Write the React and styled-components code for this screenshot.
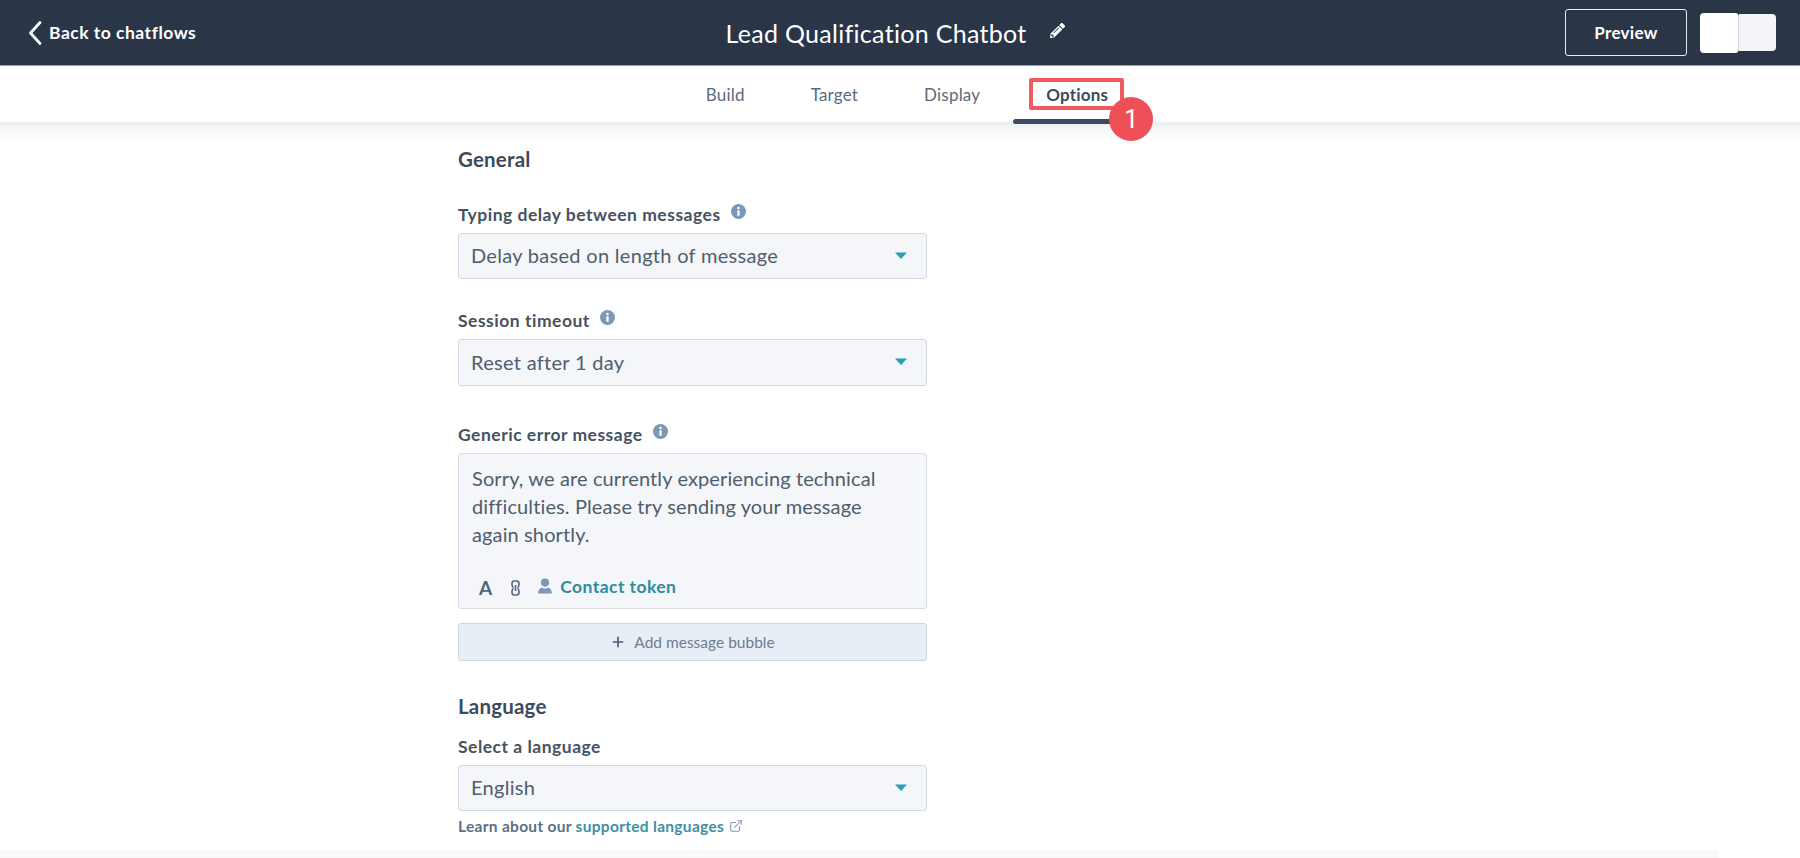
import React from "react";
import styled, { createGlobalStyle } from "styled-components";
import { Plus, ExternalLink } from "lucide-react";
import { FaPencilAlt } from "react-icons/fa";

const GlobalStyle = createGlobalStyle`
  html, body {
    margin: 0;
    padding: 0;
    background: #fff;
    font-family: "Lato", "Open Sans", sans-serif;
    color: #33475b;
  }
`;

const InfoIcon = () => (
  <InfoSvg viewBox="0 0 14 14">
    <circle cx="7" cy="7" r="7" fill="#7c98b6" />
    <circle cx="7" cy="3.8" r="1.2" fill="#fff" />
    <rect x="5.9" y="5.8" width="2.2" height="5.2" rx="0.5" fill="#fff" />
  </InfoSvg>
);

const Caret = () => (
  <CaretSvg viewBox="0 0 12 7">
    <path d="M0 0.5h12L6 7z" fill="#2a9fb3" />
  </CaretSvg>
);

const Select = ({ value, height }) => (
  <SelectBox $height={height}>
    <span>{value}</span>
    <Caret />
  </SelectBox>
);

export default function App() {
  return (
    <>
      <GlobalStyle />
      <Page>
        <Header>
          <BackLink>
            <svg width="14" height="26" viewBox="0 0 14 26" fill="none" stroke="#fff" strokeWidth="2.8" strokeLinecap="round" strokeLinejoin="round">
              <path d="M12 2.500L2.500 13l9.500 10.500" />
            </svg>
            <span>Back to chatflows</span>
          </BackLink>
          <TitleGroup>
            <Title>Lead Qualification Chatbot</Title>
            <PencilWrap>
              <FaPencilAlt size={15} color="#fff" />
            </PencilWrap>
          </TitleGroup>
          <Actions>
            <PreviewBtn>Preview</PreviewBtn>
            <Toggle>
              <ToggleKnob />
              <ToggleRest />
            </Toggle>
          </Actions>
        </Header>

        <TabBar>
          <Tab>Build</Tab>
          <Tab>Target</Tab>
          <Tab>Display</Tab>
          <Tab $active>
            Options
            <Highlight />
            <Badge>1</Badge>
          </Tab>
        </TabBar>

        <Main>
          <Column>
            <SectionTitle>General</SectionTitle>

            <Label $top={31}>
              Typing delay between messages <InfoIcon />
            </Label>
            <Select value="Delay based on length of message" height={46} />

            <Label $top={29}>
              Session timeout <InfoIcon />
            </Label>
            <Select value="Reset after 1 day" height={47} />

            <Label $top={36}>
              Generic error message <InfoIcon />
            </Label>
            <MessageBox>
              <MessageText>
                Sorry, we are currently experiencing technical difficulties.
                Please try sending your message again shortly.
              </MessageText>
              <MessageTools>
                <ToolLetter>A</ToolLetter>
                <svg width="9" height="16" viewBox="0 0 9 16" fill="none" stroke="#51667c" strokeWidth="1.6">
                  <path d="M2.500 7.500C1.500 7 1 6 1 4.500V3.500C1 2 2 1 3.500 1h2C7 1 8 2 8 3.500v1C8 6 7.500 7 6.500 7.500" />
                  <path d="M2.500 8.500C1.500 9 1 10 1 11.500v1C1 14 2 15 3.500 15h2C7 15 8 14 8 12.500v-1C8 10 7.500 9 6.500 8.500" />
                  <path d="M4.500 5v6" />
                </svg>
                <PersonSvg viewBox="0 0 12 14">
                  <circle cx="6" cy="4" r="3.6" fill="#7c98b6" />
                  <path d="M0 13.500c0-3.500 2-5 3.500-5 1 .8 4 .8 5 0 1.500 0 3.500 1.500 3.500 5z" fill="#7c98b6" />
                </PersonSvg>
                <TokenLink>Contact token</TokenLink>
              </MessageTools>
            </MessageBox>

            <AddButton>
              <Plus size={16} strokeWidth={2.4} color="#425b76" />
              Add message bubble
            </AddButton>

            <SectionTitle $top={33}>Language</SectionTitle>

            <Label $top={16}>Select a language</Label>
            <Select value="English" height={46} />

            <HelpText>
              Learn about our <HelpLink>supported languages</HelpLink>
              <ExternalLink size={14} strokeWidth={1.8} color="#7c98b6" />
            </HelpText>
          </Column>
        </Main>
        <BottomStrip />
      </Page>
    </>
  );
}

const Page = styled.div`
  width: 1800px;
  height: 858px;
  overflow: hidden;
  display: flex;
  flex-direction: column;
`;

const Header = styled.header`
  height: 66px;
  flex: none;
  box-sizing: border-box;
  background: #2a3547;
  border-bottom: 1px solid #97a3ad;
  display: grid;
  grid-template-columns: 1fr auto 1fr;
  align-items: center;
  padding: 0 24px 0 28px;
`;

const BackLink = styled.div`
  display: flex;
  align-items: center;
  gap: 7px;
  color: #fff;
  font-size: 17.5px;
  font-weight: 700;
  letter-spacing: 0.5px;
`;

const TitleGroup = styled.div`
  display: flex;
  align-items: center;
  gap: 23px;
  padding-right: 14px;
  padding-top: 1px;
`;

const Title = styled.div`
  color: #fff;
  font-size: 25px;
  font-weight: 400;
  letter-spacing: 0.3px;
`;

const PencilWrap = styled.span`
  display: flex;
  margin-top: -5px;
`;

const Actions = styled.div`
  display: flex;
  justify-content: flex-end;
  align-items: center;
  gap: 13px;
`;

const PreviewBtn = styled.button`
  width: 122px;
  height: 47px;
  box-sizing: border-box;
  background: transparent;
  border: 1px solid #e6ebf0;
  border-radius: 3px;
  color: #fff;
  font-family: inherit;
  font-size: 17px;
  font-weight: 700;
  letter-spacing: 0.3px;
`;

const Toggle = styled.div`
  display: flex;
  align-items: center;
`;

const ToggleKnob = styled.div`
  width: 39px;
  height: 40px;
  background: #fff;
  border-radius: 4px;
  border-right: 1px solid #cfd6de;
  box-sizing: border-box;
`;

const ToggleRest = styled.div`
  width: 37px;
  height: 37px;
  background: #f3f5f8;
  border-radius: 0 4px 4px 0;
`;

const TabBar = styled.nav`
  height: 56px;
  flex: none;
  background: #fff;
  display: flex;
  justify-content: center;
  padding-left: 14px;
  box-sizing: border-box;
  position: relative;
  z-index: 1;
`;

const Tab = styled.div`
  position: relative;
  display: flex;
  align-items: center;
  padding: 0 33px 0;
  height: 100%;
  box-sizing: border-box;
  font-size: 17px;
  font-weight: ${(p) => (p.$active ? 700 : 400)};
  letter-spacing: 0.2px;
  color: ${(p) => (p.$active ? "#3b4a60" : "#5a6b7d")};

  ${(p) =>
    p.$active &&
    `
    &::after {
      content: "";
      position: absolute;
      left: 0;
      right: 0;
      bottom: -2px;
      height: 5px;
      border-radius: 3px;
      background: #3b4a60;
    }
  `}
`;

const Highlight = styled.span`
  position: absolute;
  left: 16px;
  top: 12px;
  width: 95px;
  height: 32px;
  box-sizing: border-box;
  border: 4px solid #ef5a5f;
  border-radius: 2px;
`;

const Badge = styled.span`
  position: absolute;
  z-index: 2;
  left: 96px;
  top: 31px;
  width: 44px;
  height: 44px;
  border-radius: 50%;
  background: #ef5058;
  color: #fff;
  display: flex;
  align-items: center;
  justify-content: center;
  font-family: "Roboto", sans-serif;
  font-size: 25px;
  font-weight: 400;
`;

const Main = styled.main`
  flex: 1;
  min-height: 0;
  background: linear-gradient(to bottom, #eaedf1 0, #f6f7f9 8px, #fff 20px);
  padding: 25px 0 0 458px;
`;

const Column = styled.div`
  width: 469px;
  display: flex;
  flex-direction: column;
`;

const SectionTitle = styled.h2`
  margin: ${(p) => p.$top || 0}px 0 0;
  font-size: 20.500px;
  line-height: 24px;
  font-weight: 700;
  color: #3b4a5c;
  letter-spacing: 0.2px;
`;

const Label = styled.div`
  margin: ${(p) => p.$top || 0}px 0 7px;
  height: 24px;
  display: flex;
  align-items: center;
  gap: 10px;
  font-size: 17.5px;
  font-weight: 700;
  color: #46525f;
  letter-spacing: 0.5px;
`;

const InfoSvg = styled.svg`
  width: 15px;
  height: 15px;
  margin-top: -5px;
`;

const SelectBox = styled.div`
  height: ${(p) => p.$height}px;
  box-sizing: border-box;
  background: #f4f6f9;
  border: 1px solid #d0d9e3;
  border-radius: 3px;
  display: flex;
  align-items: center;
  justify-content: space-between;
  padding: 0 19px 2px 12px;
  font-size: 20px;
  color: #4f5e6e;
  letter-spacing: 0.3px;
`;

const CaretSvg = styled.svg`
  width: 12px;
  height: 7px;
`;

const MessageBox = styled.div`
  height: 156px;
  box-sizing: border-box;
  background: #f4f6f9;
  border: 1px solid #d5dde6;
  border-radius: 3px;
  padding: 10px 13px 0;
`;

const MessageText = styled.div`
  font-size: 20px;
  line-height: 28px;
  color: #4f5e6e;
  letter-spacing: 0.12px;
  height: 112px;
`;

const MessageTools = styled.div`
  display: flex;
  align-items: center;
  padding-left: 7px;
  gap: 19px;
`;

const ToolLetter = styled.span`
  font-size: 19px;
  font-weight: 700;
  color: #51667c;
`;

const PersonSvg = styled.svg`
  width: 14px;
  height: 16px;
  margin: -4px -10px 0 -1px;
`;

const TokenLink = styled.span`
  font-size: 17.5px;
  font-weight: 700;
  color: #2f8b9f;
  letter-spacing: 0.45px;
  margin-top: -2px;
  margin-left: -1px;
`;

const AddButton = styled.div`
  margin-top: 14px;
  height: 38px;
  box-sizing: border-box;
  background: #e8eef5;
  border: 1px solid #cbd6e2;
  border-radius: 3px;
  display: flex;
  align-items: center;
  justify-content: center;
  gap: 8px;
  font-size: 15.5px;
  color: #6d7d8e;
`;

const HelpText = styled.div`
  margin-top: 6px;
  display: flex;
  align-items: center;
  font-size: 15.5px;
  line-height: 18px;
  font-weight: 700;
  color: #5c7186;
  letter-spacing: 0.3px;
  white-space: pre;

  svg {
    margin-left: 5px;
  }
`;

const HelpLink = styled.span`
  color: #3f8fa3;
  margin-left: 0;
`;

const BottomStrip = styled.div`
  width: 1719px;
  height: 8px;
  flex: none;
  background: #f8f9fb;
`;
